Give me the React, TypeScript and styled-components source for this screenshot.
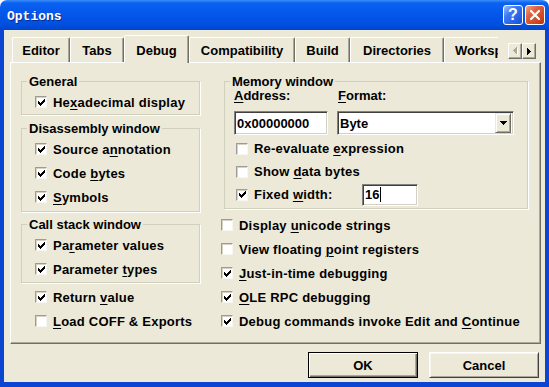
import React from 'react';
import styled, { createGlobalStyle } from 'styled-components';

const face = '#ECE9D8';
const shade = '#ACA899';
const dark = '#716F64';

const GlobalStyle = createGlobalStyle`
  html, body { margin: 0; padding: 0; background: #fff; }
  body {
    font-family: 'Liberation Sans', Arial, sans-serif;
    font-size: 13px;
    font-weight: bold;
    color: #000;
  }
  * { box-sizing: border-box; }
`;

const Window = styled.div`
  width: 549px;
  height: 387px;
  display: flex;
  flex-direction: column;
`;

const TitleBar = styled.div`
  height: 30px;
  flex: none;
  display: flex;
  align-items: center;
  padding: 0 4px 0 7px;
  border-radius: 7px 7px 0 0;
  background: linear-gradient(#3d8dfb 0px, #0a62f0 3px, #0558ec 12px, #0150e0 24px, #0044cc 30px);
`;

const Title = styled.span`
  flex: 1;
  margin-top: 2px;
  font-family: 'Liberation Mono', 'Courier New', monospace;
  font-size: 13px;
  font-weight: bold;
  color: #fff;
  text-shadow: 1px 1px 0 #0b2b8c;
`;

const CaptionButton = styled.div<{ $kind: 'help' | 'close' }>`
  width: 20px;
  height: 20px;
  margin-left: 2px;
  border: 1px solid #fff;
  border-radius: 3px;
  display: flex;
  align-items: center;
  justify-content: center;
  color: #fff;
  font: bold 16px 'Liberation Sans', Arial, sans-serif;
  background: ${(p) =>
    p.$kind === 'close'
      ? 'linear-gradient(135deg, #f3a48c 0%, #e0613f 35%, #cf4520 75%, #b8340f 100%)'
      : 'linear-gradient(135deg, #9ec0ff 0%, #3f78f0 35%, #2260e6 75%, #1a4fcc 100%)'};
`;

const Frame = styled.div`
  flex: 1;
  display: flex;
  flex-direction: column;
  background: ${face};
  border: 4px solid #0b45d2;
  border-top: 0;
  border-bottom-width: 5px;
  padding-top: 5px;
`;

const TabRow = styled.div`
  height: 27px;
  flex: none;
  display: flex;
  align-items: flex-start;
  padding-left: 8px;
  position: relative;
  z-index: 1;
`;

const TabStrip = styled.div`
  width: 486px;
  height: 28px;
  display: flex;
  align-items: flex-end;
  overflow: hidden;
`;

const Tab = styled.div<{ $w: number; $active?: boolean; $clipped?: boolean }>`
  flex: none;
  width: ${(p) => p.$w}px;
  height: ${(p) => (p.$active ? 28 : 25)}px;
  margin-bottom: ${(p) => (p.$active ? 0 : 1)}px;
  padding-top: ${(p) => (p.$active ? 7 : 5)}px;
  padding-left: ${(p) => (p.$clipped ? 10 : 0)}px;
  line-height: 15px;
  text-align: ${(p) => (p.$clipped ? 'left' : 'center')};
  white-space: nowrap;
  background: ${face};
  border-top: 1px solid #fff;
  border-left: 1px solid #fff;
  border-right: 1px solid ${dark};
  border-radius: 2px 2px 0 0;
  box-shadow: inset -1px 0 0 ${shade};
`;

const Spinner = styled.div`
  display: flex;
  margin: 8px 0 0 10px;
`;

const SpinButton = styled.div`
  width: 14px;
  height: 16px;
  display: flex;
  align-items: center;
  justify-content: center;
  background: ${face};
  border-top: 1px solid #fff;
  border-left: 1px solid #fff;
  border-right: 1px solid ${dark};
  border-bottom: 1px solid ${dark};
  box-shadow: inset -1px -1px 0 ${shade};
`;

const Panel = styled.div`
  flex: none;
  margin-left: 6px;
  width: 531px;
  height: 282px;
  padding: 11px 0 0 10px;
  display: grid;
  grid-template-columns: 179px 307px;
  column-gap: 21px;
  align-items: start;
  border-top: 1px solid #fff;
  border-left: 1px solid #fff;
  border-right: 1px solid ${dark};
  border-bottom: 1px solid ${dark};
  box-shadow: inset -1px -1px 0 ${shade};
`;

const Column = styled.div`
  display: flex;
  flex-direction: column;
`;

const Group = styled.fieldset<{ $top?: number; $bottom?: number; $left?: number }>`
  margin: ${(p) => p.$top ?? 0}px 0 0 ${(p) => p.$left ?? 0}px;
  padding: 0 0 ${(p) => p.$bottom ?? 0}px 0;
  min-width: 0;
  border: 1px solid #d0d0bf;
  box-shadow: 1px 1px 0 #fff;
`;

const Legend = styled.legend`
  margin-left: 5px;
  padding: 0 2px;
  line-height: 15px;
`;

const Stack = styled.div<{ $indent?: number; $top?: number }>`
  display: flex;
  flex-direction: column;
  padding-left: ${(p) => p.$indent ?? 0}px;
  margin-top: ${(p) => p.$top ?? 0}px;
`;

const CheckRow = styled.div<{ $h?: number }>`
  height: ${(p) => p.$h ?? 24}px;
  display: flex;
  align-items: center;
  gap: 6px;
  white-space: nowrap;
`;

const Box = styled.span`
  width: 12px;
  height: 12px;
  flex: none;
  display: flex;
  align-items: center;
  justify-content: center;
  background: #fff;
  border-top: 1px solid #9d9b94;
  border-left: 1px solid #9d9b94;
  border-right: 1px solid #f7f6f1;
  border-bottom: 1px solid #f7f6f1;
  box-shadow: inset 1px 1px 0 #d6d3c6;
`;

const Caption = styled.span<{ $w?: number }>`
  width: ${(p) => (p.$w ? `${p.$w}px` : 'auto')};
  line-height: 15px;
  letter-spacing: 0.22px;
`;

const U = styled.u`
  text-decoration: underline;
  text-decoration-thickness: 1px;
  text-underline-offset: 2px;
`;

const FieldGrid = styled.div`
  display: grid;
  grid-template-columns: 94px 177px;
  column-gap: 9px;
  row-gap: 8px;
  padding-left: 9px;
`;

const FieldLabel = styled.span<{ $shift?: number }>`
  line-height: 14px;
  padding-left: ${(p) => p.$shift ?? 0}px;
`;

const Field = styled.div<{ $w?: number; $h?: number }>`
  width: ${(p) => (p.$w ? `${p.$w}px` : 'auto')};
  height: ${(p) => p.$h ?? 24}px;
  flex: none;
  display: flex;
  align-items: center;
  padding: 0 2px 0 2px;
  background: #fff;
  border-top: 1px solid #808080;
  border-left: 1px solid #808080;
  border-right: 1px solid #fff;
  border-bottom: 1px solid #fff;
  box-shadow: inset 1px 1px 0 #404040, inset -1px -1px 0 #d4d0c8;
`;

const FieldText = styled.span`
  flex: 1;
  line-height: 15px;
`;

const Caret = styled.span`
  width: 1px;
  height: 15px;
  background: #000;
  margin-left: 1px;
`;

const DropButton = styled.div`
  width: 16px;
  height: 20px;
  display: flex;
  align-items: center;
  justify-content: center;
  background: ${face};
  border-top: 1px solid ${face};
  border-left: 1px solid ${face};
  border-right: 1px solid ${dark};
  border-bottom: 1px solid ${dark};
  box-shadow: inset 1px 1px 0 #fff, inset -1px -1px 0 ${shade};
`;

const ButtonRow = styled.div`
  display: flex;
  justify-content: flex-end;
  gap: 11px;
  padding: 8px 6px 0 0;
`;

const Button = styled.div<{ $default?: boolean }>`
  width: 110px;
  height: 26px;
  display: flex;
  align-items: center;
  justify-content: center;
  background: ${face};
  border: 1px solid;
  border-color: ${(p) => (p.$default ? '#000' : '#fff #404040 #404040 #fff')};
  box-shadow: ${(p) =>
    p.$default
      ? `inset 1px 1px 0 #fff, inset -1px -1px 0 ${dark}, inset -2px -2px 0 ${shade}`
      : `inset 1px 1px 0 #f6f5ef, inset -1px -1px 0 ${shade}`};
`;

const Check = ({ on }: { on?: boolean }) => (
  <Box>
    {on && (
      <svg width="7" height="7" viewBox="0 0 7 7" shapeRendering="crispEdges">
        <path
          fill="#000"
          d="M6 0h1v1h-1z M5 1h2v1h-2z M0 2h1v1h-1z M4 2h3v1h-3z M0 3h2v1h-2z M3 3h3v1h-3z M0 4h5v1h-5z M1 5h3v1h-3z M2 6h1v1h-1z"
        />
      </svg>
    )}
  </Box>
);

const Option = ({ on, h, children }: { on?: boolean; h?: number; children: React.ReactNode }) => (
  <CheckRow $h={h}>
    <Check on={on} />
    <Caption>{children}</Caption>
  </CheckRow>
);

const tabs = [
  { label: 'Editor', w: 58 },
  { label: 'Tabs', w: 54 },
  { label: 'Debug', w: 65, active: true },
  { label: 'Compatibility', w: 106 },
  { label: 'Build', w: 55 },
  { label: 'Directories', w: 94 },
  { label: 'Workspace', w: 80, clipped: true },
];

export default function App() {
  return (
    <>
      <GlobalStyle />
      <Window>
        <TitleBar>
          <Title>Options</Title>
          <CaptionButton $kind="help">?</CaptionButton>
          <CaptionButton $kind="close">
            <svg width="12" height="12" viewBox="0 0 12 12">
              <path d="M2 2L10 10M10 2L2 10" stroke="#fff" strokeWidth="2.2" strokeLinecap="round" />
            </svg>
          </CaptionButton>
        </TitleBar>
        <Frame>
          <TabRow>
            <TabStrip>
              {tabs.map((t) => (
                <Tab key={t.label} $w={t.w} $active={t.active} $clipped={t.clipped}>
                  {t.label}
                </Tab>
              ))}
            </TabStrip>
            <Spinner>
              <SpinButton>
                <svg width="5" height="8" viewBox="0 0 5 8" shapeRendering="crispEdges">
                  <path fill="#fff" transform="translate(1 1)" d="M4 0h-1v1h-1v1h-1v1h-1v1h1v1h1v1h1v1h1z" />
                  <path fill={shade} d="M4 0h-1v1h-1v1h-1v1h-1v1h1v1h1v1h1v1h1z" />
                </svg>
              </SpinButton>
              <SpinButton>
                <svg width="4" height="7" viewBox="0 0 4 7" shapeRendering="crispEdges">
                  <path fill="#000" d="M0 0h1v1h1v1h1v1h1v1h-1v1h-1v1h-1v1h-1z" />
                </svg>
              </SpinButton>
            </Spinner>
          </TabRow>
          <Panel>
            <Column>
              <Group>
                <Legend>General</Legend>
                <Stack $indent={13} $top={1}>
                  <Option on>
                    He<U>x</U>adecimal display
                  </Option>
                </Stack>
              </Group>
              <Group $top={6} $bottom={2}>
                <Legend>Disassembly window</Legend>
                <Stack $indent={13} $top={1}>
                  <Option on>
                    Source a<U>n</U>notation
                  </Option>
                  <Option on>
                    Code <U>b</U>ytes
                  </Option>
                  <Option on>
                    <U>S</U>ymbols
                  </Option>
                </Stack>
              </Group>
              <Group $top={5} $bottom={1}>
                <Legend>Call stack window</Legend>
                <Stack $indent={13} $top={1}>
                  <Option on>
                    Pa<U>r</U>ameter values
                  </Option>
                  <Option on>
                    Parameter <U>t</U>ypes
                  </Option>
                </Stack>
              </Group>
              <Stack $indent={14} $top={2}>
                <Option on>
                  Return <U>v</U>alue
                </Option>
                <Option>
                  <U>L</U>oad COFF &amp; Exports
                </Option>
              </Stack>
            </Column>
            <Column>
              <Group $left={3} $bottom={2}>
                <Legend>Memory window</Legend>
                <FieldGrid>
                  <FieldLabel>
                    <U>A</U>ddress:
                  </FieldLabel>
                  <FieldLabel $shift={1}>
                    <U>F</U>ormat:
                  </FieldLabel>
                  <Field>
                    <FieldText>0x00000000</FieldText>
                  </Field>
                  <Field>
                    <FieldText>Byte</FieldText>
                    <DropButton>
                      <svg width="7" height="4" viewBox="0 0 7 4" shapeRendering="crispEdges">
                        <path fill="#000" d="M0 0h7v1h-1v1h-1v1h-1v1h-1v-1h-1v-1h-1v-1h-1z" />
                      </svg>
                    </DropButton>
                  </Field>
                </FieldGrid>
                <Stack $indent={11} $top={2}>
                  <Option h={23}>
                    Re-evaluate <U>e</U>xpression
                  </Option>
                  <Option h={23}>
                    Show <U>d</U>ata bytes
                  </Option>
                  <CheckRow $h={23}>
                    <Check on />
                    <Caption $w={102}>
                      Fixed <U>w</U>idth:
                    </Caption>
                    <Field $w={56} $h={22}>
                      <span>16</span>
                      <Caret />
                    </Field>
                  </CheckRow>
                </Stack>
              </Group>
              <Stack $top={4}>
                <Option>
                  Display <U>u</U>nicode strings
                </Option>
                <Option>
                  View floating <U>p</U>oint registers
                </Option>
                <Option on>
                  <U>J</U>ust-in-time debugging
                </Option>
                <Option on>
                  <U>O</U>LE RPC debugging
                </Option>
                <Option on>
                  Debug commands invoke Edit and <U>C</U>ontinue
                </Option>
              </Stack>
            </Column>
          </Panel>
          <ButtonRow>
            <Button $default>OK</Button>
            <Button>Cancel</Button>
          </ButtonRow>
        </Frame>
      </Window>
    </>
  );
}
